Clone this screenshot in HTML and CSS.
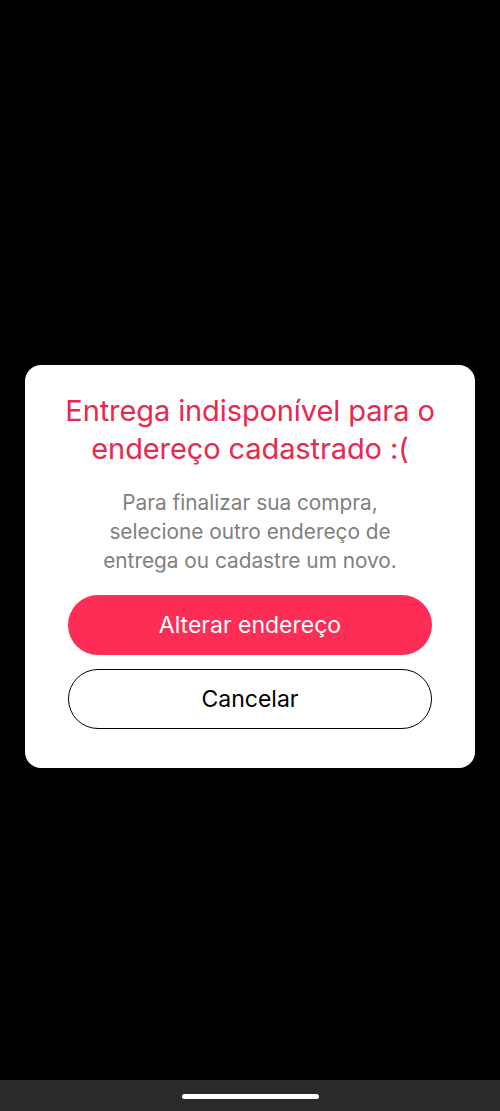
FILE: index.html
```html
<!DOCTYPE html>
<html lang="pt-BR">
<head>
<meta charset="utf-8">
<link rel="stylesheet" href="styles.css">
</head>
<body>
<div class="screen">
  <div class="overlay">
    <div class="card">
      <h1 class="title">Entrega indisponível para o endereço cadastrado :(</h1>
      <p class="text">Para finalizar sua compra, selecione outro endereço de entrega ou cadastre um novo.</p>
      <div class="actions">
        <button class="btn btn-primary">Alterar endereço</button>
        <button class="btn btn-outline">Cancelar</button>
      </div>
    </div>
  </div>
  <div class="navbar"><div class="handle"></div></div>
</div>
</body>
</html>
```
FILE: styles.css
```css
* { box-sizing: border-box; }
html, body { margin: 0; padding: 0; background: #000; }
body { font-family: Inter, "Noto Sans", sans-serif; }
.screen { width: 500px; height: 1111px; display: flex; flex-direction: column; }
.overlay { flex: 1; display: flex; align-items: center; justify-content: center; padding-top: 53px; }
.card {
  width: 450px;
  background: #fff;
  border-radius: 16px;
  padding: 27px 43px 39px;
  display: flex;
  flex-direction: column;
  align-items: center;
}
.title {
  margin: 0 -20px;
  color: #e8294f;
  font-size: 29px;
  font-weight: 400;
  line-height: 38px;
  text-align: center;
  letter-spacing: -0.1px;
}
.text {
  margin: 20px 0 0;
  color: #808080;
  font-size: 20.8px;
  line-height: 29px;
  text-align: center;
  padding: 0 26px;
}
.actions { width: 100%; display: flex; flex-direction: column; gap: 14px; margin-top: 20px; }
.btn {
  height: 60px;
  border-radius: 30px;
  font-family: Inter, "Noto Sans", sans-serif;
  font-size: 23px;
  width: 100%;
}
.btn-primary { background: #fe2d55; color: #fff; border: none; }
.btn-outline { background: #fff; color: #000; border: 1px solid #000; }
.navbar { height: 31px; background: #2a2a2a; display: flex; justify-content: center; padding-top: 14px; }
.handle { width: 137px; height: 5px; border-radius: 3px; background: #fff; }
```
